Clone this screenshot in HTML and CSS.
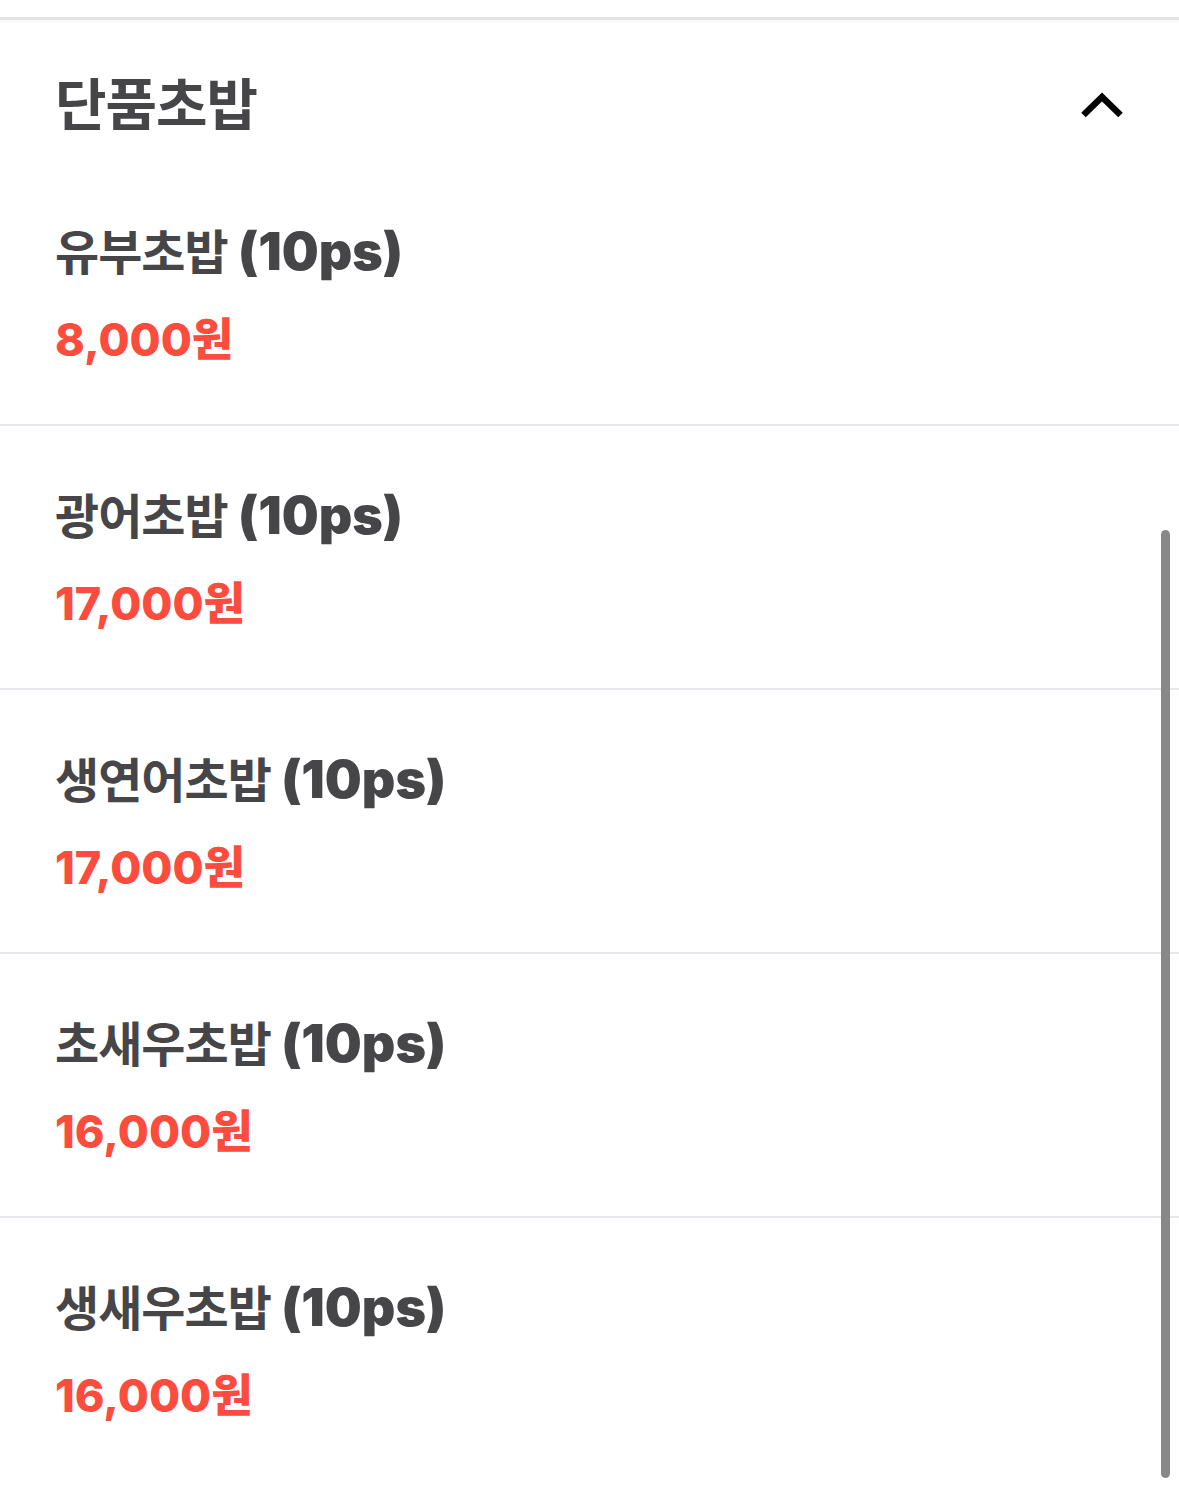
FILE: index.html
```html
<!DOCTYPE html>
<html lang="ko">
<head>
    <meta charset="UTF-8">
    <meta name="viewport" content="width=device-width, initial-scale=1.0">
    <title>단품초밥</title>
    <link rel="stylesheet" href="styles.css">
</head>
<body>
    <div class="topbar"></div>

    <div class="category">
        <div class="category-head">
            <label>단품초밥</label>
            <svg class="chevron" width="48" height="30" viewBox="0 0 48 30">
                <path d="M5.5 25 L24 7 L42.5 25" fill="none" stroke="#000" stroke-width="6.5"/>
            </svg>
        </div>

        <div class="menu-item">
            <div class="name">유부초밥 <span class="qty">(10ps)</span></div>
            <div class="price">8,000원</div>
        </div>
        <div class="menu-item">
            <div class="name">광어초밥 <span class="qty">(10ps)</span></div>
            <div class="price">17,000원</div>
        </div>
        <div class="menu-item">
            <div class="name">생연어초밥 <span class="qty">(10ps)</span></div>
            <div class="price">17,000원</div>
        </div>
        <div class="menu-item">
            <div class="name">초새우초밥 <span class="qty">(10ps)</span></div>
            <div class="price">16,000원</div>
        </div>
        <div class="menu-item last">
            <div class="name">생새우초밥 <span class="qty">(10ps)</span></div>
            <div class="price">16,000원</div>
        </div>
    </div>

    <div class="scrollbar"></div>
</body>
</html>
```

FILE: styles.css
```css
body{
    margin: 0;
    background-color: #fff;
    font-family: Inter, "Noto Sans CJK KR", sans-serif;
    overflow: hidden;
    height: 1511px;
}

.topbar{
    height: 17px;
    border-bottom: 3px solid #e4e4e6;
    box-shadow: 0 2px 4px rgba(0, 0, 0, 0.04);
}

.category-head{
    height: 124px;
    padding: 18px 56px 0 55px;
    display: flex;
    align-items: center;
    justify-content: space-between;
}

.category-head label{
    font-size: 56px;
    font-weight: 700;
    color: #464648;
    letter-spacing: -1px;
}

.chevron{
    margin-top: 10px;
    margin-right: -3px;
}

.menu-item{
    height: 262px;
    padding-left: 55px;
    border-bottom: 2px solid #e8e8ec;
}

.menu-item.last{
    border-bottom: none;
}

.menu-item .name{
    padding-top: 60px;
    height: 60px;
    line-height: 60px;
    font-size: 48px;
    font-weight: 700;
    color: #464648;
    letter-spacing: -1px;
}

.menu-item .qty{
    font-size: 52px;
    font-weight: 900;
    letter-spacing: 0;
}

.menu-item .price{
    margin-top: 30px;
    height: 56px;
    line-height: 56px;
    font-size: 45px;
    font-weight: 800;
    color: #fc4c3e;
}

.scrollbar{
    position: absolute;
    left: 1161px;
    top: 530px;
    width: 9px;
    height: 948px;
    border-radius: 5px;
    background-color: #888;
}
```
